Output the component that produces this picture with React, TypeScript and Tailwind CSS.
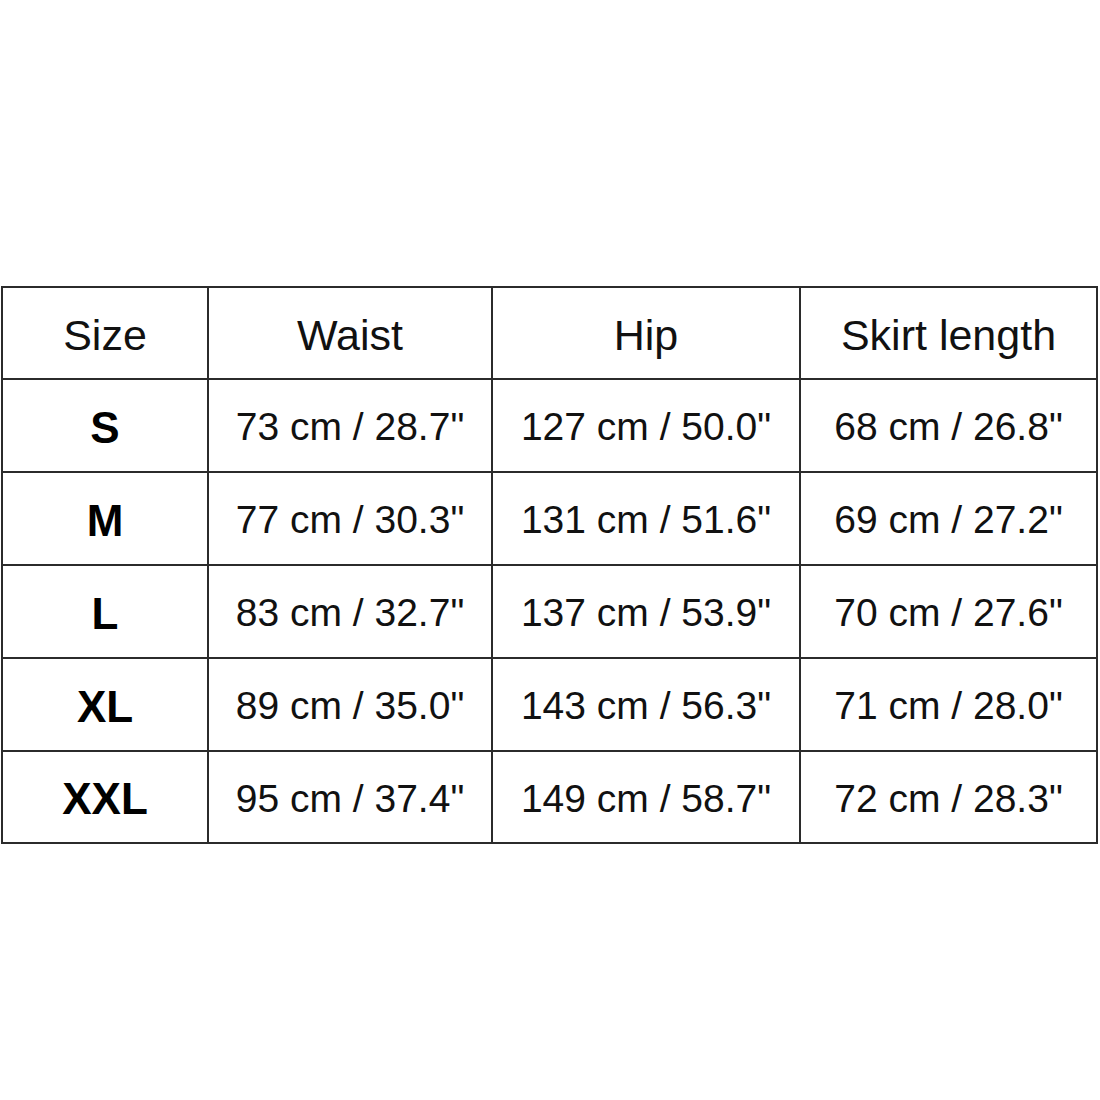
import React from 'react';

const rows = [
  { size: 'S', waist: '73 cm / 28.7"', hip: '127 cm / 50.0"', skirt: '68 cm / 26.8"' },
  { size: 'M', waist: '77 cm / 30.3"', hip: '131 cm / 51.6"', skirt: '69 cm / 27.2"' },
  { size: 'L', waist: '83 cm / 32.7"', hip: '137 cm / 53.9"', skirt: '70 cm / 27.6"' },
  { size: 'XL', waist: '89 cm / 35.0"', hip: '143 cm / 56.3"', skirt: '71 cm / 28.0"' },
  { size: 'XXL', waist: '95 cm / 37.4"', hip: '149 cm / 58.7"', skirt: '72 cm / 28.3"' },
];

const cell = 'flex items-center justify-center border-r-2 border-b-2 border-[#2b2b2b]';

const App = () => {
  return (
    <div className="w-[1100px] h-[1100px] bg-white pt-[286px] pl-[1px] font-['Liberation_Sans',Arial,sans-serif] text-[39px] text-[#111]">
      <div className="grid grid-cols-[206px_284px_308px_297px] w-[1097px] border-t-2 border-l-2 border-[#2b2b2b]">
        <div className={`${cell} h-[92px] text-[43px] pt-1`}>Size</div>
        <div className={`${cell} h-[92px] text-[43px] pt-1`}>Waist</div>
        <div className={`${cell} h-[92px] text-[43px] pt-1`}>Hip</div>
        <div className={`${cell} h-[92px] text-[43px] pt-1`}>Skirt length</div>
        {rows.map((r, i) => {
          const h = i === rows.length - 1 ? 'h-[92px]' : 'h-[93px]';
          return (
            <React.Fragment key={r.size}>
              <div className={`${cell} ${h} font-bold text-black text-[44px] pt-1`}>{r.size}</div>
              <div className={`${cell} ${h} pt-1`}>{r.waist}</div>
              <div className={`${cell} ${h} pt-1`}>{r.hip}</div>
              <div className={`${cell} ${h} pt-1`}>{r.skirt}</div>
            </React.Fragment>
          );
        })}
      </div>
    </div>
  );
};

export default App;
